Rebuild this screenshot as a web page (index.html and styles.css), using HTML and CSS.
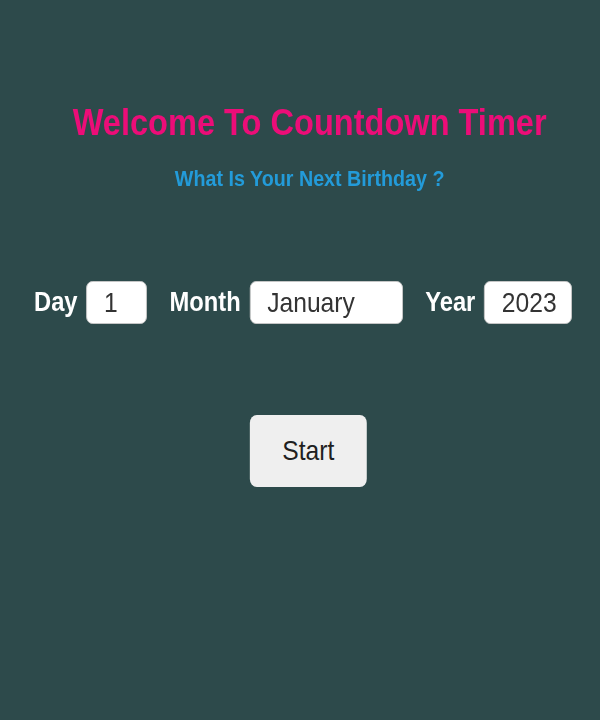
FILE: index.html
```html
<!DOCTYPE html>
<html>
<head>
<meta charset="utf-8">
<link rel="stylesheet" href="styles.css">
</head>
<body>
<main class="page">
  <h1 class="title">Welcome To Countdown Timer</h1>
  <h2 class="subtitle">What Is Your Next Birthday ?</h2>
  <div class="form-row">
    <label class="field"><span class="label">Day</span><input class="box box-day" type="text" value="1"></label>
    <label class="field"><span class="label">Month</span><input class="box box-month" type="text" value="January"></label>
    <label class="field"><span class="label">Year</span><input class="box box-year" type="text" value="2023"></label>
  </div>
  <div class="actions"><button class="start">Start</button></div>
</main>
</body>
</html>
```
FILE: styles.css
```css
html, body {
  margin: 0;
  padding: 0;
  background: #2d4a4b;
  height: 100%;
  overflow: hidden;
}
body {
  font-family: "Liberation Sans", Arial, sans-serif;
}
.page {
  display: flex;
  flex-direction: column;
  align-items: center;
  padding-top: 102px;
  transform: scaleX(0.88);
  transform-origin: 300px 0;
}
.title {
  margin: 0;
  color: #ec0d78;
  font-size: 37px;
  font-weight: bold;
  padding-left: 22px;
}
.subtitle {
  margin: 22px 0 0;
  color: #239bd9;
  font-size: 22.4px;
  font-weight: bold;
  padding-left: 22px;
}
.form-row {
  display: flex;
  align-items: center;
  margin-top: 89px;
  padding-left: 7px;
  gap: 25.5px;
  width: max-content;
}
.field {
  display: flex;
  align-items: center;
  gap: 10px;
}
.label {
  color: #ffffff;
  font-size: 27px;
  font-weight: bold;
}
.box {
  box-sizing: border-box;
  height: 43px;
  border: 1px solid #c8c8c8;
  border-radius: 7px;
  background: #ffffff;
  color: #333333;
  font-family: "Liberation Sans", Arial, sans-serif;
  font-size: 28px;
  padding: 0 0 0 19px;
  outline: none;
}
.box-day { width: 69px; }
.box-month { width: 174px; }
.box-year { width: 100px; }
.actions {
  margin-top: 91px;
  padding-left: 19px;
}
.start {
  width: 133px;
  height: 72px;
  background: #efefef;
  border: none;
  border-radius: 8px;
  color: #1f1f1f;
  font-family: "Liberation Sans", Arial, sans-serif;
  font-size: 28px;
}
```
